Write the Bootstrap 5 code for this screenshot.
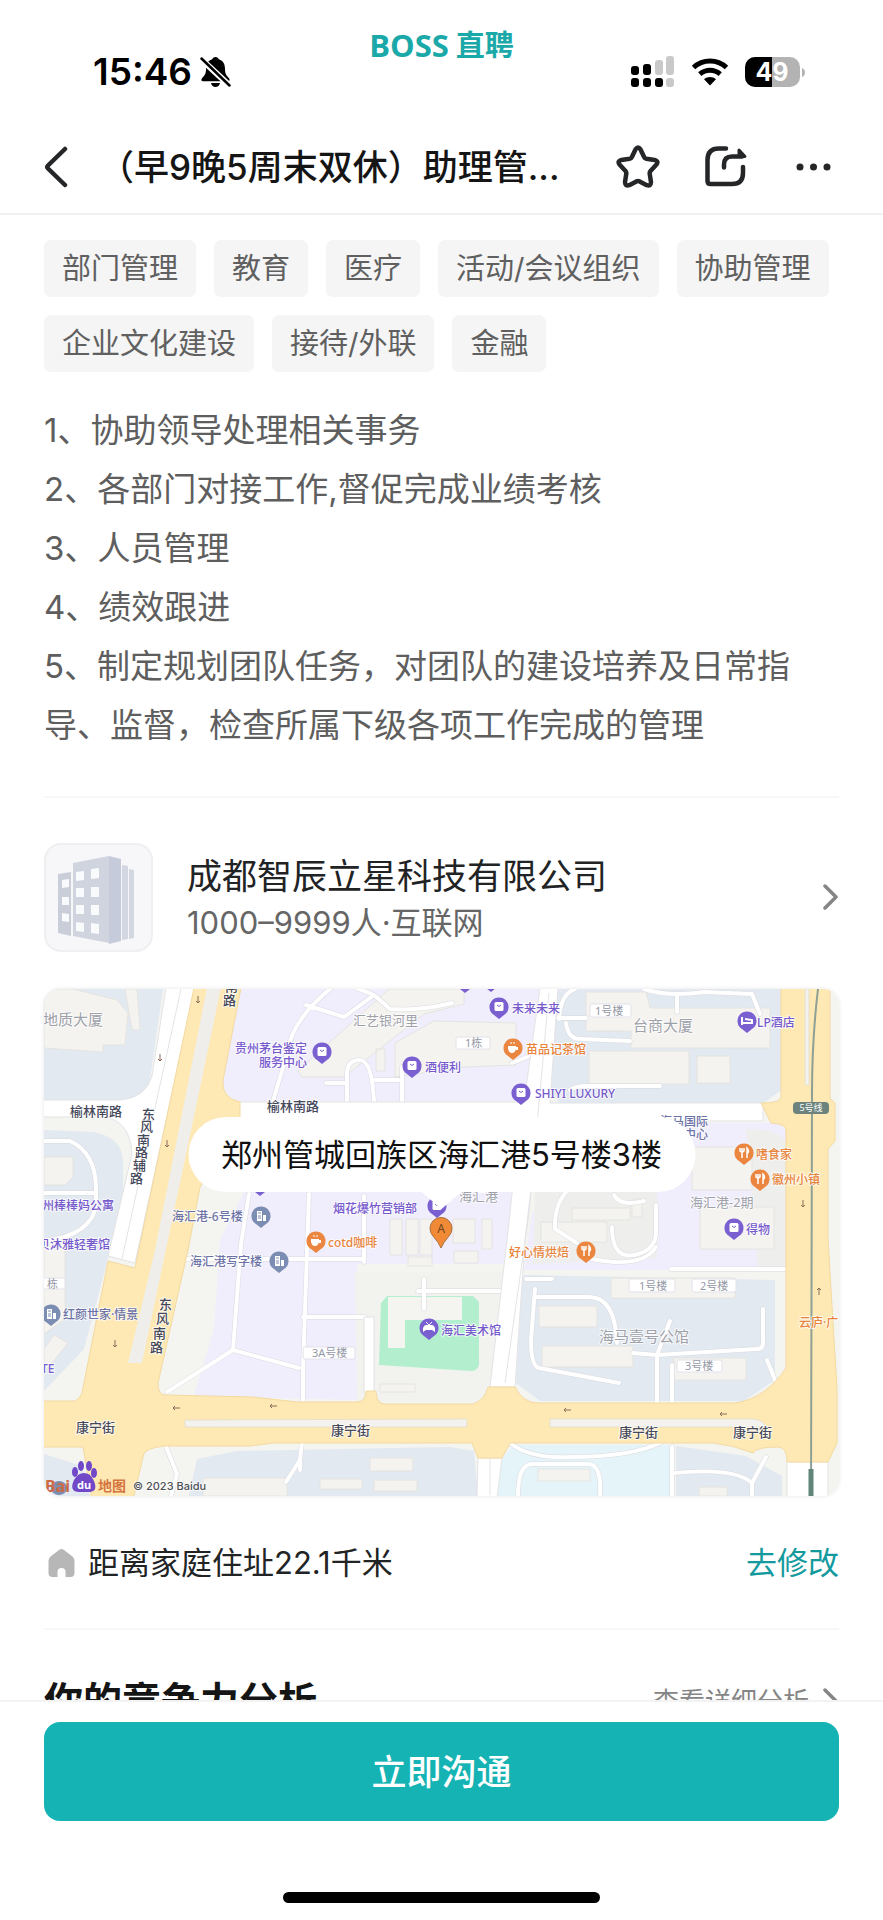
<!DOCTYPE html>
<html lang="zh-CN">
<head>
<meta charset="utf-8">
<meta name="viewport" content="width=device-width, initial-scale=1">
<title>BOSS直聘 职位详情</title>
<link href="https://cdn.jsdelivr.net/npm/bootstrap@5.3.0/dist/css/bootstrap.min.css" rel="stylesheet">
<style>
  :root { --teal: #16b3b4; --ink: #222325; --body: #5e5e5e; --gutter: 44px; }
  body { font-family: Inter, "Noto Sans CJK SC", sans-serif; color: var(--ink); background: #fff; }
  svg { display: block; flex-shrink: 0; }
  .gutter { padding-left: var(--gutter); padding-right: var(--gutter); }
  .status-bar { display: grid; grid-template-columns: 1fr auto 1fr; height: 120px; padding: 25px 77px 0; color: #000; }
  .status-side { height: 40px; margin-top: 27px; }
  .clock { font-size: 37px; font-weight: 600; line-height: 40px; margin-left: 16px; }
  .brand { color: #1aa9a8; font: 700 31px/40px "Open Sans", "Noto Sans CJK SC", sans-serif; gap: 7px; height: 40px; }
  .brand-cn { font-size: 29px; }
  .title-bar { height: 95px; border-bottom: 2px solid #f1f1f1; }
  .job-title { font-size: 35px; line-height: 50px; font-weight: 500; margin: 0 0 0 31px; color: #151515; white-space: nowrap; overflow: hidden; }
  .title-actions { gap: 48px; }
  .title-actions .plain-btn:first-child { margin-right: -3px; }
  .plain-btn { border: 0; background: none; padding: 0; color: #252628; }
  .skills { padding-top: 25px; gap: 18px; }
  .skill { background: #f5f5f5; border-radius: 7px; font-size: 29px; line-height: 57px; padding: 0 18px; color: #606060; }
  .duties { margin-top: 29px; padding-bottom: 41px; font-size: 33px; line-height: 59px; color: var(--body); border-bottom: 2px solid #f7f7f7; }
  .company { margin-top: 45px; color: var(--ink); }
  .company-text { margin-left: 34px; }
  .company-name { font-size: 35px; line-height: 50px; }
  .company-meta { font-size: 31px; line-height: 44px; color: #666; }
  .map-box { margin-top: 37px; border-radius: 16px; }
  .map-box > svg { width: 100%; height: auto; border-radius: 16px; box-shadow: 0 0 4px #e6e6e6; }
  .callout { top: 25.3%; background: #fff; border-radius: 38px; padding: 0 33px; font-size: 31px; line-height: 75px; color: #101010; white-space: nowrap; }
  .callout::after { content: ""; position: absolute; top: 100%; left: 50%; margin-left: -20px; border: 20px solid transparent; border-top: 17px solid #fff; border-bottom: 0; }
  .home-row { padding: 45px 0 43px; font-size: 31px; line-height: 44px; border-bottom: 2px solid #f7f7f7; }
  .home-row svg { margin: 0 12px 0 3px; }
  .edit-link { color: #149a9e; text-decoration: none; }
  .rank-row { padding-top: 43px; }
  .rank-title { font-size: 39px; line-height: 56px; font-weight: 700; margin: 0; color: #151515; }
  .rank-link { font-size: 26px; color: #858585; text-decoration: none; gap: 14px; }
  .bottom-bar { border-top: 2px solid #f3f3f3; padding-top: 20px; height: 220px; background: #fff; }
  .chat-btn { background: var(--teal); color: #fff; font-size: 35px; font-weight: 500; line-height: 50px; padding: 25px 0 24px; border: 0; border-radius: 16px; }
  .chat-btn:hover { background: #12a3a4; color: #fff; }
  .home-indicator { width: 317px; height: 11px; border-radius: 6px; background: #000; margin: auto auto 17px; }

  .cityMap text { font-family: "Noto Sans", "Noto Sans CJK SC", sans-serif; font-size: 13px; paint-order: stroke; stroke: #fff; stroke-opacity: .75; stroke-width: 2px; stroke-linejoin: round; }
  .cityMap .poi { font-size: 12px; font-weight: 500; }
  .cityMap .tiny { font-size: 11px; fill: #9599a6; }
  .cityMap .area { font-size: 15px; fill: #9ea1a9; }
  .cityMap .area2 { font-size: 13px; fill: #9ea1a9; }
  .cityMap .street { fill: #45485a; font-weight: 500; }
  .cityMap .shop { fill: #7659cd; }
  .cityMap .food { fill: #e8833a; }
  .cityMap .office { fill: #6c72a6; }
  .cityMap .bare, .cityMap .bare text { stroke: none; }
</style>
</head>
<body>
<div class="vh-100 d-flex flex-column overflow-hidden">

  <header class="flex-shrink-0">
    <div class="status-bar">
      <div class="status-side d-flex align-items-center">
        <span class="clock">15:46</span>
        <svg class="ms-2" width="31" height="32" viewBox="0 0 31 32" aria-label="静音">
          <path d="M15.500 1c-1.800 0-2.900 1-3.300 2.300C7.500 4.700 6 8.500 6 13c0 5-1.500 6.500-4 9.200-1 1.200-.8 3 1 3H28c1.800 0 2-1.800 1-3-2.500-2.700-4-4.200-4-9.200 0-4.500-1.500-8.300-6.200-9.700C18.400 2 17.300 1 15.500 1z"/>
          <path d="M11 27h9c-.5 2.500-2.300 4-4.500 4S11.500 29.500 11 27z"/>
          <path d="M1 3l29 27" stroke="#fff" stroke-width="6"/><path d="M1.500 2.500l28 27" stroke="#000" stroke-width="2.500" stroke-linecap="round"/>
        </svg>
      </div>
      <div class="brand d-flex align-items-center"><span>BOSS</span><span class="brand-cn">直聘</span></div>
      <div class="status-side d-flex align-items-center justify-content-end">
        <svg width="44" height="32" viewBox="0 0 44 32" aria-label="信号">
          <rect x="0" y="10" width="8" height="9" rx="3"/><rect x="12" y="8" width="8" height="11" rx="3"/>
          <g fill="#c9c9c9"><rect x="24" y="4" width="8" height="15" rx="3"/><rect x="35" y="0" width="8" height="19" rx="3"/><rect x="35" y="22" width="8" height="9" rx="3"/></g>
          <rect x="0" y="22" width="8" height="9" rx="3"/><rect x="12" y="22" width="8" height="9" rx="3"/><rect x="24" y="22" width="8" height="9" rx="3"/>
        </svg>
        <svg class="mx-3" width="38" height="28" viewBox="0 0 38 28" aria-label="无线网络">
          <g fill="none" stroke="#000" stroke-width="5"><path d="M2.500 9.500C12 .8 26 .8 35.500 9.500"/><path d="M8.800 16.200c6-5.200 14.400-5.200 20.400 0"/></g>
          <path d="M13 21.300c3.500-3 8.500-3 12 0L19 27.500z"/>
        </svg>
        <svg width="61" height="31" viewBox="0 0 61 31" role="img" aria-label="电量49">
          <clipPath id="cell"><rect width="55" height="30" rx="10"/></clipPath>
          <g clip-path="url(#cell)"><rect width="55" height="30" fill="#b3b3b3"/><rect width="27" height="30"/></g>
          <path d="M57 11c4 1 4 8 0 9z" fill="#b3b3b3"/>
          <text x="27" y="24" text-anchor="middle" font-size="25" font-weight="700" fill="#fff">49</text>
        </svg>
      </div>
    </div>
    <nav class="title-bar gutter d-flex align-items-center" aria-label="职位">
      <button class="plain-btn" aria-label="返回">
        <svg width="24" height="42" viewBox="0 0 24 42" fill="none" stroke="currentColor" stroke-width="4.500" stroke-linecap="round" stroke-linejoin="round"><path d="M21 3L4 19.500q-1.500 1.500 0 3L21 39"/></svg>
      </button>
      <h1 class="job-title">（早9晚5周末双休）助理管...</h1>
      <div class="title-actions ms-auto d-flex align-items-center">
        <button class="plain-btn" aria-label="收藏">
          <svg width="44" height="43" viewBox="0 0 44 43" fill="none" stroke="currentColor" stroke-width="4.500" stroke-linejoin="round"><path d="M19.600 4.200q2.400-3.600 4.800 0L28 11.800q.7 1.600 2.400 1.900l8.200 1.200q4.400 1.100 1.900 4.600l-6 6.500q-1 1.200-.8 2.700l1.300 8.500q-.2 4.300-4.200 3l-7.200-3.800q-1.600-.7-3.200 0l-7.200 3.800q-4 1.300-4.200-3l1.300-8.500q.2-1.500-.8-2.700l-6-6.500q-2.500-3.500 1.900-4.600l8.200-1.200q1.700-.3 2.400-1.900z"/></svg>
        </button>
        <button class="plain-btn" aria-label="分享">
          <svg width="43" height="41" viewBox="0 0 43 41" fill="none" stroke="currentColor" stroke-width="4.500" stroke-linecap="round" stroke-linejoin="round"><path d="M21 2.500H14Q2.500 2.500 2.500 14v21q0 3 3 3H27q11 0 11-11v-6"/><path d="M19 21.500v-3q0-8 8-8h10"/><path d="M34 4l6 6.500h-6z" fill="currentColor" stroke-width="3"/></svg>
        </button>
        <button class="plain-btn me-2" aria-label="更多">
          <svg width="35" height="8" viewBox="0 0 35 8" fill="currentColor"><circle cx="4" cy="4" r="3.500"/><circle cx="17.500" cy="4" r="3.500"/><circle cx="31" cy="4" r="3.500"/></svg>
        </button>
      </div>
    </nav>
  </header>

  <main class="gutter flex-fill overflow-hidden">
    <div class="skills d-flex flex-wrap">
      <span class="skill">部门管理</span><span class="skill">教育</span><span class="skill">医疗</span><span class="skill">活动/会议组织</span><span class="skill">协助管理</span><span class="skill">企业文化建设</span><span class="skill">接待/外联</span><span class="skill">金融</span>
    </div>

    <section class="duties">
      <div>1、协助领导处理相关事务</div>
      <div>2、各部门对接工作,督促完成业绩考核</div>
      <div>3、人员管理</div>
      <div>4、绩效跟进</div>
      <div>5、制定规划团队任务，对团队的建设培养及日常指导、监督，检查所属下级各项工作完成的管理</div>
    </section>

    <a href="#company" class="company d-flex align-items-center text-decoration-none">
      <svg width="109" height="109" viewBox="0 0 109 109">
        <rect x="1" y="1" width="107" height="107" rx="16" fill="#f7f7fa" stroke="#efeff1" stroke-width="2"/>
        <path d="M14 31l13-2v64l-13-3z" fill="#c9ced8"/>
        <path d="M29 20l36-7v87l-36-7z" fill="#cfd4de"/>
        <path d="M65 13l12 3v82l-12 3z" fill="#c5cbdb"/>
        <path d="M78 22l6 1v73l-6 1zM85 26l5 1v68l-5 1z" fill="#d3d7e1"/>
        <g fill="#f8fafc"><path d="M18 37l7-1v8l-7 1zM18 54h7v8h-7zM18 70l7 1v8l-7-1zM32 29l8-1v9l-8 1zM47 26l8-1v10l-8 1zM32 45h8v9h-8zM47 44h8v10h-8zM32 62h8v9h-8zM47 62h8v10h-8zM32 79l8 1v9l-8-1zM47 80l8 1v10l-8-1z"/></g>
      </svg>
      <div class="company-text">
        <div class="company-name">成都智辰立星科技有限公司</div>
        <div class="company-meta">1000–9999人·互联网</div>
      </div>
      <svg class="ms-auto" width="16" height="28" viewBox="0 0 16 28" fill="none" stroke="#858585" stroke-width="3.500" stroke-linecap="round" stroke-linejoin="round"><path d="M2 2l11 11L2 24"/></svg>
    </a>

    <div class="map-box position-relative">
      <svg class="cityMap" viewBox="0 0 795 507" role="img" aria-label="公司位置地图">
        <defs>
          <g id="drop"><path d="M0 12L-5 8A9.500 9.500 0 1 1 5 8z"/></g>
          <g id="bagPin"><use href="#drop" fill="#7a5fd0"/><rect x="-4.500" y="-5" width="9" height="9" rx="1.500" fill="#fff"/><path d="M-2-2q2 3 4 0" fill="none" stroke="#7a5fd0"/></g>
          <g id="cupPin"><use href="#drop" fill="#ea8640"/><path d="M-5-2h8v3q-1 4-4 4t-4-4zM3-1h2v3H3z" fill="#fff"/><path d="M-2-6v2M1-6v2" stroke="#fff"/></g>
          <g id="forkPin"><use href="#drop" fill="#ea8640"/><path d="M-4-5v3q2 2 4 0v-3M-2-5V5M3 5V-5q3 3 0 6" fill="none" stroke="#fff" stroke-width="1.500"/></g>
          <g id="officePin"><use href="#drop" fill="#7b8db2"/><path d="M-4-5h5v10h-5zM2-1h3v6H2z" fill="#fff"/><path d="M-3-3h3M-3 0h3M-3 2h3" stroke="#7b8db2"/></g>
          <g id="lanes" fill="none" stroke-linecap="round" stroke-linejoin="round">
            <path d="M286 0Q247 32 243 65L229 112M262 16l38 12 30-22-20-8M330 6l16 14q30 2 62-6M303 112V85q0-14 13-14 12 1 14 41M282 94h21M330 91h25M358 78v34"/>
            <path d="M514 29h28M515 30q2-26 16-30M522 34q2 16 14 16l50 2M600 0q24 8 60 3l48 2 8 20M633 5v18M526 101q6-4 16-4h74M468 74l20-8"/>
            <path d="M0 152h26q26 12 26 48v16q-4 30-52 36M0 204h50"/>
            <path d="M205 205l-8 50-8 106-66 42M189 361l66 18M265 205l-6 174v32M140 270h180M259 328h62M320 207v66M380 320V290M374 302h84"/>
            <path d="M525 200q-15 14-14 40l22 14M570 206q6 12 30 6M568 238q0 32 22 28 20-4 22-20v-30M548 270q50 10 64-12M627 280h117"/>
            <path d="M491 300l-4 51q0 26 8 28l80 15M491 308h54q26 0 28 46M589 364l24 2 100-6q6 0 6-6v-34M613 366l13-34M613 366v48M628 376v38M723 371l8 20M482 290h26"/>
            <path d="M466 454q20 16 60 14 60 0 90-14M474 507q0-32 14-32h56q14 0 12 32M628 458v49M630 484q60-6 78 10v13M708 494l14-26"/>
            <path d="M121 455l12 30-6 22M258 453l-2 18-14 22M256 471v10"/>
          </g>
        </defs>
        <rect width="795" height="507" fill="#f4f4f1"/>
        <!-- city blocks -->
        <g fill="#e2e9f1">
          <path d="M0 0h119l-13 90q-6 21-30 21H0zM0 141l50 2q29 6 29 30v32L60 285 40 360 0 402zM512 0h226v101l-19 13H516l-10-10z"/>
          <path d="M480 286l251 5v100l-31 21H496l-24-18 4-94zM153 470l40-8 213-4 24 4 4 45H145zM632 457l70 10 36 20v20H632zM0 465l38 12 8 30H0z"/>
        </g>
        <g fill="#f0edfc">
          <path d="M196 0h300l-12 112H196q-17-4-17-20zM200 203l-24 48-6 89-20 67 163 4V275h148l12-72zM616 134h113q15 0 15 20v127H480l8-58 120-10z"/>
        </g>
        <path d="M459 468l11-12h156v51H453z" fill="#e4f4f8"/>
        <path d="M311 283h149l-14 115-14 15H313z" fill="#f2f2ef"/>
        <path d="M491 203h122v66l-124 6zM702 140q42 0 42 20v120h-30z" fill="#eeeeec"/>
        <g fill="#f4f3f0" stroke="#e4e4e0">
          <path d="M0 0h29l44 11 11 13-3 32H59v7L0 59zM81 0h12l3 41h-8zM0 168h29v20l-8 8H0zM0 250h21v80L0 345zM10 346l14 8-24 30v-24z"/>
          <path d="M254 82L345 0h75v15l-40 10-80 63h-42zM351 88V54l39-22 82 2v42l-52 2zM332 60h9v22h-9z"/>
          <path d="M542 3h60l4 16h120v40H587V42h-45zM545 62h100v33H545zM653 67h33v27h-33zM648 158h60v43h-60zM656 218h74v42h-74z"/>
          <path d="M567 289h124v20H567zM495 317h58v21h-58zM498 357h91v21h-91zM630 369h72v22h-72zM326 469h43v13h-43zM276 490h42v10h-42zM330 491h43v11h-43zM159 489h84v18h-84zM336 395h35v8h-35zM364 268h24v9h-24z"/>
          <path d="M346 230h12v36h-12zM362 230h12v36h-12zM376 230h12v36h-12zM409 230h22v24h-22zM438 230h10v30h-10zM410 262h24v12h-24zM528 219h58v12h-58zM588 210h10v18h-10zM497 233h66v20h-66zM494 480h52v12h-52zM655 498h28v9h-28z"/>
        </g>
        <!-- museum lawn -->
        <path d="M343 307h86l6 6v63q-2 6-8 6l-92-6 2-62z" fill="#b3efcf"/>
        <path d="M344 308h74v23h-57v28h-17z" fill="#f4f4f1"/>
        <use href="#lanes" stroke="#dadae0" stroke-width="5"/>
        <use href="#lanes" stroke="#fff" stroke-width="4"/>
        <!-- wide white streets -->
        <g fill="#fff" stroke="#e3e3e6" stroke-width="1">
          <path d="M-2 111h78q26-2 32-24L122-1h29L91 274l-27-7 24-102q-2-35-30-37H-2z"/>
          <path d="M190 113h290l16-114h18l-8 115h213v18H495l-14 119-10 147h-25l17-147 13-119H190zM434 469h24l-5 40h-20zM743 473h41v36h-41zM320 328h10v76h-10z"/>
        </g>
        <path d="M137 0L78 270M505 4l-20 220-24 170M446 470v36" stroke="#e4e4e8" fill="none"/>
        <!-- arterial roads -->
        <path d="M150-1h47l-18 92q-2 18 17 22v15l-40 70-12 63-30 133q0 12 7 12l88 2 44 5h60q9 0 9-11h10q0 13 9 13h88q12-4 15-17h27q8 16 23 16h197q30-4 51-35V141q0-6-15-7l-10-20q20 0 20-6V-1h49v110l5 5v38l-7 8v90l9 150v54l-9 19h-41q0-15-9-15-22 0-25 6-20-8-40-10H466l-8 15h-24l-6-15H229l-23 3h-85q-22 2-22 11l-10 43H48l-9-53H-1v-46h32q7-4 8-13l25-127 27 7z" fill="#fee9b4" stroke="#f3d9a0"/>
        <path d="M163-1h14l-79 375H84l27-113z" fill="#efeeea"/>
        <path d="M141 431l282-1v8H141zM506 430h205q10 2 10 8H506zM761 0h4v96h-4z" fill="#f4f2ee" stroke="#e8e0cc"/>
        <path d="M774 0q-6 50-6 105l-1 402" fill="none" stroke="#8ea095" stroke-width="2"/>
        <path d="M767 480v27" stroke="#628579" stroke-width="5"/>
        <g fill="none" stroke="#8b6b58"><path id="arrowWest" d="M136 419h-7m2-2l-2 2 2 2"/><use href="#arrowWest" x="97" y="-2"/><use href="#arrowWest" x="391" y="2"/><use href="#arrowWest" x="547" y="6"/><path id="arrowSouth" d="M116 65v7m-2-2l2 2 2-2"/><use href="#arrowSouth" x="38" y="-58"/><use href="#arrowSouth" x="7" y="86"/><use href="#arrowSouth" x="-45" y="286"/><use href="#arrowSouth" x="643" y="146"/><path d="M775 306v-7m-2 2l2-2 2 2"/></g>
        <!-- number plates -->
        <g fill="#fff" stroke="#e2e2ea"><rect x="546" y="15" width="41" height="13" rx="2"/><rect x="412" y="48" width="34" height="12" rx="2"/><rect x="-4" y="289" width="25" height="11" rx="2"/><rect x="259" y="358" width="52" height="12" rx="2"/><rect x="585" y="290" width="46" height="13" rx="2"/><rect x="648" y="290" width="44" height="13" rx="2"/><rect x="633" y="371" width="45" height="12" rx="2"/></g>
        <g class="bare"><text class="tiny" x="551" y="26">1号楼</text><text class="tiny" x="421" y="58">1栋</text><text class="tiny" x="3" y="299">栋</text><text class="tiny" x="268" y="368">3A号楼</text><text class="tiny" x="595" y="301">1号楼</text><text class="tiny" x="656" y="301">2号楼</text><text class="tiny" x="641" y="381">3号楼</text></g>
        <!-- areas -->
        <text class="area" x="-1" y="36">地质大厦</text><text class="area2" x="309" y="36">汇艺银河里</text><text class="area" x="589" y="42">台商大厦</text><text class="area" x="555" y="353">海马壹号公馆</text><text class="area2" x="415" y="212">海汇港</text><text class="area2" x="646" y="218">海汇港-2期</text>
        <!-- streets -->
        <g class="street"><text x="26" y="127">榆林南路</text><text x="223" y="122">榆林南路</text><text x="32" y="443">康宁街</text><text x="287" y="446">康宁街</text><text x="575" y="448">康宁街</text><text x="689" y="448">康宁街</text>
          <text x="181 179" y="2 16">南路</text>
          <text x="98 96 93 91 89 86" y="130 142 156 168 181 194">东风南路辅路</text>
          <text x="115 112 109 106" y="320 334 349 363">东风南路</text></g>
        <!-- shops -->
        <g class="shop">
          <text class="poi" text-anchor="end" x="263" y="64">贵州茅台鉴定</text><text class="poi" text-anchor="end" x="263" y="78">服务中心</text><text class="poi" x="381" y="83">酒便利</text><text class="poi" x="468" y="24">未来未来</text><text class="poi" x="713" y="38">LP酒店</text><text class="poi" x="491" y="109">SHIYI LUXURY</text><text class="poi" x="702" y="245">得物</text><text class="poi" x="-2" y="221">州棒棒妈公寓</text><text class="poi" x="-6" y="260">贝沐雅轻奢馆</text><text class="poi" x="289" y="224">烟花爆竹营销部</text><text class="poi" x="397" y="346">海汇美术馆</text><text class="poi" x="-3" y="384">TE</text>
        </g>
        <g class="food"><text class="poi" x="482" y="65">苗品记茶馆</text><text class="poi" x="712" y="170">嗜食家</text><text class="poi" x="728" y="195">徽州小镇</text><text class="poi" x="284" y="258">cotd咖啡</text><text class="poi" x="465" y="268">好心情烘焙</text><text class="poi" x="755" y="338">云庐·广</text></g>
        <g class="office"><text class="poi" text-anchor="end" x="664" y="137">海马国际</text><text class="poi" text-anchor="end" x="664" y="150">中心</text><text class="poi" x="128" y="232">海汇港-6号楼</text><text class="poi" x="146" y="277">海汇港写字楼</text><text class="poi" x="19" y="330">红颜世家·情景</text></g>
        <!-- pins -->
        <use href="#bagPin" x="278" y="63"/><use href="#bagPin" x="368" y="77"/><use href="#bagPin" x="455" y="18"/><use href="#bagPin" x="477" y="104"/><use href="#bagPin" x="690" y="239"/><use href="#bagPin" x="393" y="217"/><use href="#bagPin" x="216" y="195"/><use href="#bagPin" x="421" y="-8"/><use href="#bagPin" x="447" y="-9"/>
        <g transform="translate(703 32)"><use href="#drop" fill="#7a5fd0"/><path d="M-5-4v8M-5 2H5V-1L-2-2" fill="none" stroke="#fff" stroke-width="2"/></g>
        <g transform="translate(385 339)"><use href="#drop" fill="#7a5fd0"/><path d="M-6 4v-4q1-3 3-3h6q2 0 3 3v4l-3-2h-6z" fill="#fff"/><path d="M-3-6l3 3 3-3" fill="none" stroke="#fff"/></g>
        <use href="#cupPin" x="469" y="59"/><use href="#cupPin" x="272" y="252"/><use href="#forkPin" x="700" y="164"/><use href="#forkPin" x="716" y="190"/><use href="#forkPin" x="542" y="262"/>
        <use href="#officePin" x="217" y="227"/><use href="#officePin" x="235" y="272"/><use href="#officePin" x="7" y="325"/>
        <rect x="749" y="113" width="36" height="12" rx="4" fill="#6b837c"/><text class="bare" x="767" y="122" text-anchor="middle" fill="#fff" style="font-size:9px">5号线</text>
        <path d="M397 259q-2-5-8-12a11 11 0 1 1 16 0q-6 7-8 12z" fill="#f08a36" stroke="#a9713f"/><text class="bare" x="397" y="244" text-anchor="middle" fill="#6b4424" style="font-size:12px">A</text>
        <!-- map provider -->
        <g fill="#7048c8"><ellipse cx="31" cy="483" rx="3" ry="5"/><ellipse cx="37" cy="477" rx="3" ry="5"/><ellipse cx="45" cy="477" rx="3" ry="5"/><ellipse cx="50" cy="484" rx="3" ry="5"/><path d="M40 484q6 0 9 6 6 12-3 13H34q-9-1-4-12 4-7 10-7z"/></g>
        <ellipse cx="15" cy="499" rx="8" ry="7" fill="#7b8db2"/>
        <text class="bare" x="1" y="503" fill="#cf6a45" style="font-size:16px;font-weight:700">Bai</text><text class="bare" x="33" y="500" fill="#fff" style="font-size:11px;font-weight:700">du</text><text class="bare" x="54" y="502" fill="#d5743d" style="font-size:14px;font-weight:700">地图</text>
        <text x="89" y="501" fill="#4d4f55" style="font-family:Inter,sans-serif;font-size:11px;font-weight:500">© 2023 Baidu</text>
      </svg>
      <div class="callout position-absolute start-50 translate-middle-x">郑州管城回族区海汇港5号楼3楼</div>
    </div>

    <div class="home-row d-flex align-items-center">
      <svg width="29" height="30" viewBox="0 0 29 30"><path d="M12 2q2.500-2 5 0l8.500 6.500Q27.500 10 27.500 13v12q0 4-4 4h-5v-5q0-4-4-4t-4 4v5h-5q-4 0-4-4V13q0-3 2-4.500z" fill="#b7b7b7"/></svg>
      <span>距离家庭住址22.1千米</span>
      <a href="#edit" class="edit-link ms-auto">去修改</a>
    </div>

    <div class="rank-row d-flex align-items-center justify-content-between">
      <h2 class="rank-title">你的竞争力分析</h2>
      <a href="#rank" class="rank-link d-flex align-items-center">查看详细分析
        <svg width="16" height="28" viewBox="0 0 16 28" fill="none" stroke="#858585" stroke-width="3.500" stroke-linecap="round" stroke-linejoin="round"><path d="M2 3l11 11L2 25"/></svg>
      </a>
    </div>
  </main>

  <footer class="bottom-bar gutter flex-shrink-0 d-flex flex-column">
    <button class="btn chat-btn w-100">立即沟通</button>
    <div class="home-indicator"></div>
  </footer>
</div>
<script src="https://cdn.jsdelivr.net/npm/bootstrap@5.3.0/dist/js/bootstrap.bundle.min.js"></script>
</body>
</html>
